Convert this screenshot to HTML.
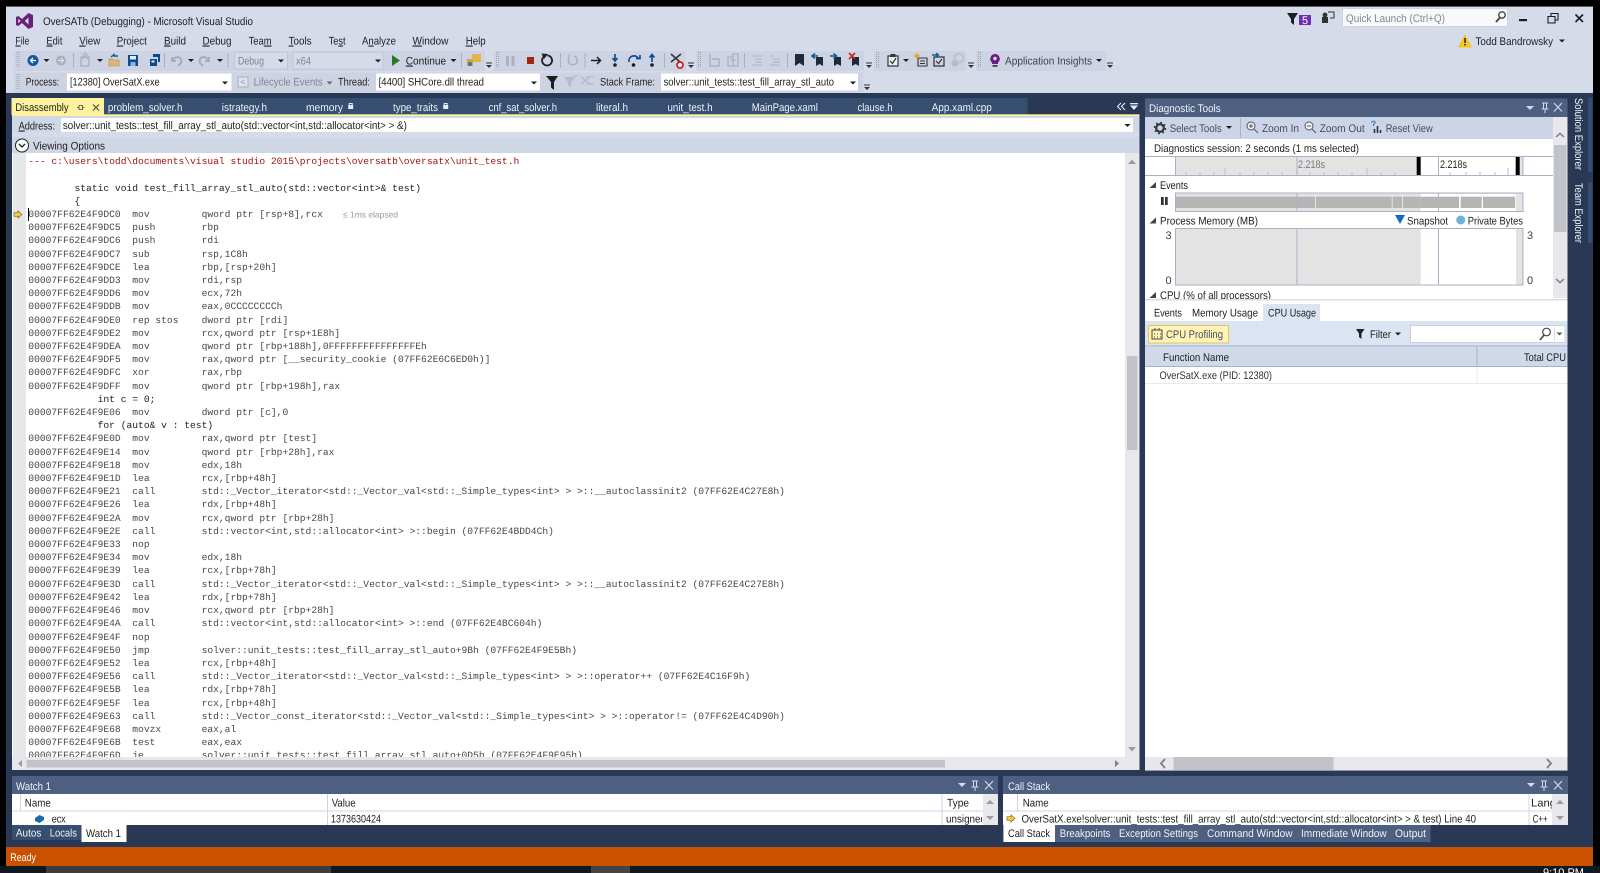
<!DOCTYPE html>
<html><head><meta charset="utf-8"><title>OverSATb (Debugging) - Microsoft Visual Studio</title>
<style>
html,body{margin:0;padding:0;background:#000;width:1600px;height:873px;overflow:hidden}
body>svg{position:absolute;left:0;top:0;text-rendering:geometricPrecision;filter:blur(.3px)}
text{font-family:"Liberation Sans",sans-serif;font-size:11px;fill:#1e1e1e;white-space:pre}
.g{fill:#7f8694}.w{fill:#fff}.l{fill:#f0f3f8}
pre{position:absolute;left:28.3px;top:155.2px;width:1094px;height:601.8px;overflow:hidden;margin:0;font-family:"Liberation Mono",monospace;font-size:9.645px;line-height:13.2px;color:#484848;text-rendering:geometricPrecision;filter:blur(.3px)}
pre b{font-weight:normal;color:#222}pre i{font-style:normal;color:#a31515}
</style></head><body>
<svg width="1600" height="873" viewBox="0 0 1600 873" xmlns="http://www.w3.org/2000/svg">
<defs>
<polygon id="dd" points="-3,-1.5 3,-1.5 0,1.5" fill="#1e1e1e"/>
<g id="ov"><rect x="-3" y="-2.5" width="6" height="1" fill="#333"/><polygon points="-3,0 3,0 0,3" fill="#333"/></g>
<pattern id="dots" width="2" height="2" patternUnits="userSpaceOnUse"><rect width="1" height="1" fill="#9aa3b5"/></pattern>
<g id="grip"><rect x="-2" y="-8" width="4" height="16" fill="url(#dots)"/></g>
<g id="arr"><path d="M-4,-1.8H0V-3.6L4,0L0,3.6V1.8H-4Z" fill="#f5c93b" stroke="#7a6a20" stroke-width=".7"/></g>
<g id="lock"><rect x="-2.5" y="-1" width="5" height="4" fill="#e6eaf2"/><path d="M-1.5,-1V-2.5H1.5V-1" fill="none" stroke="#e6eaf2"/></g>
<g id="tri"><polygon points="-3.5,3 3,3 3,-3" fill="#444"/></g>
</defs>

<!-- frame -->
<rect x="6" y="6" width="1587" height="860" fill="#d6dbe9"/>
<rect x="6" y="6" width="1587" height="1" fill="#5a5f68"/>
<rect x="6" y="93" width="1587" height="754" fill="#293955"/>
<rect x="6" y="847" width="1587" height="19" fill="#ca5100"/>
<rect x="0" y="866" width="1600" height="7" fill="#0e1a22"/>
<rect x="46" y="866" width="285" height="7" fill="#3d3d3d"/>
<rect x="591" y="866" width="39" height="7" fill="#444"/>
<text x="1543" y="876" class="w" font-size="10">9:10 PM</text>

<!-- title -->
<path fill-rule="evenodd" fill="#68217a" d="M28.5,13L33,15V27L28.5,29L22,23L18.3,26L16,25V17L18.3,16L22,19ZM28.5,17.5L24.8,21L28.5,24.5ZM18.3,18.7V23.3L20.6,21Z"/>
<text x="43" y="25" textLength="210" lengthAdjust="spacingAndGlyphs">OverSATb (Debugging) - Microsoft Visual Studio</text>
<path d="M1287,13H1298L1294,19V25L1291,22.5V19Z" fill="#1e1e1e"/>
<rect x="1299" y="15" width="12" height="10" fill="#6c2fb4"/><text x="1302" y="24" class="w" font-size="10">5</text>
<rect x="1322" y="17" width="6" height="6" fill="#333"/><circle cx="1325" cy="15" r="2.4" fill="#333"/><path d="M1328,12H1334V18H1330" fill="none" stroke="#333"/>
<rect x="1342.5" y="8.5" width="165" height="18" fill="#f8f9fb" stroke="#ccd3e2"/>
<text x="1346" y="22" class="g" textLength="99" lengthAdjust="spacingAndGlyphs">Quick Launch (Ctrl+Q)</text>
<circle cx="1502" cy="15" r="3.2" fill="none" stroke="#444" stroke-width="1.4"/><path d="M1500,17.5L1496,22" stroke="#444" stroke-width="1.8"/>
<rect x="1519" y="19" width="8" height="2.2" fill="#1e1e1e"/>
<path d="M1548,16.5H1555V23H1548ZM1548,16.5M1551,16V13.5H1558V20H1555" fill="none" stroke="#1e1e1e" stroke-width="1.1"/>
<path d="M1575.5,14.5L1583,22M1583,14.5L1575.5,22" stroke="#1e1e1e" stroke-width="1.6"/>
<polygon points="1465,35 1471.5,47 1458.5,47" fill="#fccc14" stroke="#e6b800" stroke-width=".5"/><rect x="1464.3" y="38" width="1.5" height="5" fill="#222"/><rect x="1464.3" y="44" width="1.5" height="1.5" fill="#222"/>
<text x="1475.5" y="45" textLength="77.5" lengthAdjust="spacingAndGlyphs">Todd Bandrowsky</text>
<use href="#dd" x="1562" y="41"/>

<!-- menu -->
<g>
<text x="15.4" y="44.5" textLength="14" lengthAdjust="spacingAndGlyphs"><tspan text-decoration="underline">F</tspan>ile</text>
<text x="46.4" y="44.5" textLength="16" lengthAdjust="spacingAndGlyphs"><tspan text-decoration="underline">E</tspan>dit</text>
<text x="79.3" y="44.5" textLength="21" lengthAdjust="spacingAndGlyphs"><tspan text-decoration="underline">V</tspan>iew</text>
<text x="116.8" y="44.5" textLength="30" lengthAdjust="spacingAndGlyphs"><tspan text-decoration="underline">P</tspan>roject</text>
<text x="164" y="44.5" textLength="22" lengthAdjust="spacingAndGlyphs"><tspan text-decoration="underline">B</tspan>uild</text>
<text x="202.5" y="44.5" textLength="29" lengthAdjust="spacingAndGlyphs"><tspan text-decoration="underline">D</tspan>ebug</text>
<text x="248.6" y="44.5" textLength="23" lengthAdjust="spacingAndGlyphs">Tea<tspan text-decoration="underline">m</tspan></text>
<text x="288.6" y="44.5" textLength="23" lengthAdjust="spacingAndGlyphs"><tspan text-decoration="underline">T</tspan>ools</text>
<text x="328.6" y="44.5" textLength="17" lengthAdjust="spacingAndGlyphs">Te<tspan text-decoration="underline">s</tspan>t</text>
<text x="362" y="44.5" textLength="34" lengthAdjust="spacingAndGlyphs">A<tspan text-decoration="underline">n</tspan>alyze</text>
<text x="412.5" y="44.5" textLength="36" lengthAdjust="spacingAndGlyphs"><tspan text-decoration="underline">W</tspan>indow</text>
<text x="465.7" y="44.5" textLength="20" lengthAdjust="spacingAndGlyphs"><tspan text-decoration="underline">H</tspan>elp</text>
</g>

<!-- toolbar row 1 -->
<rect x="14" y="51" width="471" height="20" fill="#cdd3e2"/><rect x="494" y="51" width="192" height="20" fill="#cdd3e2"/><rect x="696" y="51" width="168" height="20" fill="#cdd3e2"/><rect x="874" y="51" width="92" height="20" fill="#cdd3e2"/><rect x="976" y="51" width="130" height="20" fill="#cdd3e2"/>
<use href="#grip" x="18.5" y="60"/><use href="#grip" x="498" y="60"/><use href="#grip" x="700" y="60"/><use href="#grip" x="878" y="60"/><use href="#grip" x="980" y="60"/>
<circle cx="33" cy="60.5" r="5.5" fill="#0e5c9c"/><path d="M36,60.5H31M33,58L30.5,60.5L33,63" stroke="#fff" stroke-width="1.3" fill="none"/>
<use href="#dd" x="46.5" y="60.5"/>
<circle cx="61" cy="60.5" r="5" fill="#a9afbc"/><path d="M58,60.5H63M61,58L63.5,60.5L61,63" stroke="#dde1ea" stroke-width="1.2" fill="none"/>
<rect x="73" y="53" width="1" height="15" fill="#aab1c0"/>
<path d="M81,57H89V66H81ZM85,52V55" fill="none" stroke="#a9afbc" stroke-width="1.3"/><path d="M82,54L88,59M88,54L82,59" stroke="#a9afbc"/><use href="#dd" x="100" y="60.5"/>
<path d="M109,59H112L113,60H119V66H109Z" fill="#dcb67a" stroke="#b58b3a" stroke-width=".6"/><path d="M111,57L114,54.5V56H118" fill="none" stroke="#0e5c9c" stroke-width="1.4"/>
<path d="M128,55H138V66H128Z" fill="#0b4a8f"/><rect x="130" y="56" width="6" height="3.5" fill="#e6eaf2"/><rect x="130.5" y="62" width="5" height="4" fill="#8fb3d9"/>
<path d="M150,59H157V66H150Z" fill="#0b4a8f"/><path d="M153,54H160V62H158V57H153Z" fill="#0b4a8f"/><rect x="151.5" y="60.5" width="3" height="2" fill="#e6eaf2"/>
<rect x="164" y="53" width="1" height="15" fill="#aab1c0"/>
<path d="M172,57V61H176M172,61C175,55 183,56 181,63L178,66" fill="none" stroke="#a3a9b6" stroke-width="1.8"/><use href="#dd" x="191" y="60.5"/>
<path d="M209,57V61H205M209,61C206,55 198,56 200,63L203,66" fill="none" stroke="#a3a9b6" stroke-width="1.8"/><use href="#dd" x="220" y="60.5"/>
<rect x="227.5" y="53" width="1" height="15" fill="#aab1c0"/>
<rect x="234.5" y="52" width="53" height="17" fill="#d6dbe9" stroke="#c0c6d4"/><text x="238" y="64.5" class="g" textLength="26" lengthAdjust="spacingAndGlyphs">Debug</text><use href="#dd" x="281" y="61"/>
<rect x="293" y="52" width="90" height="17" fill="#d6dbe9" stroke="#c0c6d4"/><text x="296" y="64.5" class="g" textLength="15" lengthAdjust="spacingAndGlyphs">x64</text><use href="#dd" x="378" y="61"/>
<polygon points="392,55 400,60.5 392,66" fill="#267a26"/>
<text x="405.7" y="64.5" textLength="40.5" lengthAdjust="spacingAndGlyphs"><tspan text-decoration="underline">C</tspan>ontinue</text><use href="#dd" x="453.5" y="60.5"/>
<rect x="461" y="53" width="1" height="15" fill="#aab1c0"/>
<path d="M472,54H481V62H472Z" fill="#e4b34c"/><path d="M467,59H473V66H467Z" fill="#d9a43c"/><circle cx="470" cy="64" r="2" fill="#2d76b8"/>
<use href="#ov" x="489" y="65"/>
<rect x="506" y="56" width="3" height="10" fill="#aab1c0"/><rect x="511.5" y="56" width="3" height="10" fill="#aab1c0"/>
<rect x="527" y="57" width="7" height="7" fill="#a1260d"/>
<path d="M543.5,57A5,5 0 1 0 547.5,55.5" fill="none" stroke="#1e1e1e" stroke-width="1.8"/><polygon points="541.5,53.5 548,54 544,59" fill="#1e1e1e"/>
<rect x="560" y="53" width="1" height="15" fill="#aab1c0"/>
<path d="M569,58A4.5,4.5 0 1 0 574,56" fill="none" stroke="#a9afbc" stroke-width="1.5"/><path d="M569,54V58" stroke="#a9afbc" stroke-width="1.3"/>
<rect x="584.5" y="53" width="1" height="15" fill="#aab1c0"/>
<path d="M591,60.5H600M597,57L600.5,60.5L597,64" fill="none" stroke="#1e1e1e" stroke-width="1.5"/>
<path d="M615,54V60M612.5,58L615,61L617.5,58" fill="none" stroke="#0e4f96" stroke-width="1.7"/><circle cx="615" cy="65" r="1.8" fill="#1e1e1e"/>
<path d="M629,62C628,55 637,54 638.5,59M636,58.5H640V55" fill="none" stroke="#0e4f96" stroke-width="1.7"/><circle cx="633.5" cy="65" r="1.8" fill="#1e1e1e"/>
<path d="M652,62V55M649.5,57.5L652,54.5L654.5,57.5" fill="none" stroke="#0e4f96" stroke-width="1.7"/><circle cx="652" cy="65" r="1.8" fill="#1e1e1e"/>
<rect x="664" y="53" width="1" height="15" fill="#aab1c0"/>
<path d="M671,54L680,62M681,54L671,62" stroke="#333" stroke-width="1.6"/><circle cx="680" cy="65" r="3" fill="#fff" stroke="#d8141a" stroke-width="1.7"/>
<use href="#ov" x="691" y="65"/>
<path d="M710,54V66H719V59H712" fill="none" stroke="#aab1c0" stroke-width="1.4"/>
<path d="M728,57H733V66H728ZM733,54H738V66H733ZM730,60H736" fill="none" stroke="#aab1c0" stroke-width="1.3"/>
<rect x="744" y="53" width="1" height="15" fill="#aab1c0"/>
<path d="M752,56H762M755,59H762M755,62H762M752,65H762" stroke="#b5bbc8" stroke-width="1.2"/>
<path d="M770,56H774M773,59H780M773,62H780M770,65H780" stroke="#b5bbc8" stroke-width="1.2"/>
<rect x="787" y="53" width="1" height="15" fill="#aab1c0"/>
<path d="M795,54H804V66L799.5,63L795,66Z" fill="#1e2a3a"/>
<path d="M816,57H823V66L819.5,64L816,66Z" fill="#1e2a3a"/><path d="M818,56H812.5M815,53.5L812,56L815,58.5" fill="none" stroke="#0e5c9c" stroke-width="1.6"/>
<path d="M834,57H841V66L837.5,64L834,66Z" fill="#1e2a3a"/><path d="M830,56H836M833.5,53.5L836.5,56L833.5,58.5" fill="none" stroke="#0e5c9c" stroke-width="1.6"/>
<path d="M852,57H859V66L855.5,64L852,66Z" fill="#1e2a3a"/><path d="M849,53L855,59M855,53L849,59" stroke="#c8261a" stroke-width="1.6"/>
<use href="#ov" x="869" y="65"/>
<path d="M888,56H898V66H888Z" fill="#eef0f5" stroke="#333" stroke-width="1.2"/><rect x="890.5" y="54" width="5" height="3" fill="#333"/><path d="M890,61L892.5,63.5L896,58" fill="none" stroke="#333" stroke-width="1.2"/>
<use href="#dd" x="906" y="60.5"/>
<path d="M918,58H927V66H918ZM920,61H925M920,63.5H925" fill="none" stroke="#333" stroke-width="1.1"/><circle cx="917" cy="56" r="2.4" fill="#e2a63a"/>
<path d="M934,57H944V66H934Z" fill="none" stroke="#333" stroke-width="1.2"/><path d="M936,61L938.5,63.5L942,59" fill="none" stroke="#333" stroke-width="1.2"/><path d="M932,55H938M936,53L938.5,55L936,57" fill="none" stroke="#0e5c9c" stroke-width="1.4"/>
<circle cx="959" cy="58" r="4.5" fill="none" stroke="#b5bbc8" stroke-width="1.4"/><circle cx="955" cy="63" r="3.5" fill="#b5bbc8"/>
<use href="#ov" x="971" y="65"/>
<path d="M995,54A4.8,4.8 0 0 1 998,62.5V64H992V62.5A4.8,4.8 0 0 1 995,54Z" fill="#68217a"/><circle cx="995" cy="58.5" r="1.7" fill="#e6d7ee"/><rect x="992.5" y="65" width="5" height="1.8" fill="#444"/>
<text x="1005" y="64.5" style="fill:#3b4252" textLength="87" lengthAdjust="spacingAndGlyphs">Application Insights</text><use href="#dd" x="1099" y="60.5"/>
<use href="#ov" x="1110" y="65"/>

<!-- toolbar row 2 -->
<rect x="14" y="72.5" width="849" height="20" fill="#cdd3e2"/>
<use href="#grip" x="18.5" y="82"/>
<text x="25.7" y="85.5" textLength="33.5" lengthAdjust="spacingAndGlyphs">Process:</text>
<rect x="67" y="73.5" width="164.5" height="17" fill="#fff"/>
<text x="70" y="85.5" textLength="89.6" lengthAdjust="spacingAndGlyphs">[12380] OverSatX.exe</text><use href="#dd" x="225" y="83"/>
<rect x="238" y="77" width="10" height="10" fill="#dfe3ec" stroke="#a9afbc"/><path d="M245,80L241,82L245,84" fill="none" stroke="#a9afbc"/>
<text x="253.6" y="85.5" class="g" textLength="69" lengthAdjust="spacingAndGlyphs">Lifecycle Events</text><use href="#dd" x="329.6" y="83" opacity=".6"/>
<text x="338" y="85.5" textLength="32" lengthAdjust="spacingAndGlyphs">Thread:</text>
<rect x="376" y="73.5" width="164" height="17" fill="#fff"/>
<text x="378.6" y="85.5" textLength="105.4" lengthAdjust="spacingAndGlyphs">[4400] SHCore.dll thread</text><use href="#dd" x="534" y="83"/>
<path d="M546,76H558L554,82V90L551,87.5V82Z" fill="#1e1e1e"/>
<path d="M564,77H575L571,82V87L568,85V82Z" fill="#b5bbc8"/><path d="M570,78L578,75" stroke="#b5bbc8"/>
<path d="M581,77L590,84M581,84L590,77M586,77H594M586,84H594" stroke="#b5bbc8" stroke-width="1.2"/>
<text x="600" y="85.5" textLength="55" lengthAdjust="spacingAndGlyphs">Stack Frame:</text>
<rect x="661" y="73.5" width="197" height="17" fill="#fff"/>
<text x="663.6" y="85.5" textLength="170.4" lengthAdjust="spacingAndGlyphs">solver::unit_tests::test_fill_array_stl_auto</text><use href="#dd" x="853" y="83"/>
<use href="#ov" x="867" y="87"/>

<!-- document tabs -->
<rect x="104" y="98" width="923.5" height="17" fill="#364e6f"/>
<rect x="11.5" y="98" width="92.5" height="17" fill="#fff29d"/>
<text x="15.4" y="111" textLength="53.2" lengthAdjust="spacingAndGlyphs">Disassembly</text>
<path d="M79,105.5H82.5V109.5H79ZM82.5,107.5H84.5M77,107.5H79" fill="none" stroke="#444" stroke-width=".8"/>
<path d="M93,104.5L99,110.5M99,104.5L93,110.5" stroke="#444" stroke-width="1"/>
<g class="tabs">
<text class="l" x="107.9" y="111" textLength="74.6" lengthAdjust="spacingAndGlyphs">problem_solver.h</text>
<text class="l" x="221.8" y="111" textLength="45.2" lengthAdjust="spacingAndGlyphs">istrategy.h</text>
<text class="l" x="306" y="111" textLength="37" lengthAdjust="spacingAndGlyphs">memory</text><use href="#lock" x="350.7" y="106"/>
<text class="l" x="393" y="111" textLength="45" lengthAdjust="spacingAndGlyphs">type_traits</text><use href="#lock" x="445.7" y="106"/>
<text class="l" x="488.6" y="111" textLength="68.4" lengthAdjust="spacingAndGlyphs">cnf_sat_solver.h</text>
<text class="l" x="596" y="111" textLength="32" lengthAdjust="spacingAndGlyphs">literal.h</text>
<text class="l" x="667.5" y="111" textLength="45" lengthAdjust="spacingAndGlyphs">unit_test.h</text>
<text class="l" x="751.8" y="111" textLength="66.1" lengthAdjust="spacingAndGlyphs">MainPage.xaml</text>
<text class="l" x="857.5" y="111" textLength="35" lengthAdjust="spacingAndGlyphs">clause.h</text>
<text class="l" x="931.8" y="111" textLength="60" lengthAdjust="spacingAndGlyphs">App.xaml.cpp</text>
</g>
<path d="M1121,103L1117.5,106.5L1121,110M1125,103L1121.5,106.5L1125,110" fill="none" stroke="#e6eaf2" stroke-width="1.1"/>
<rect x="1130" y="103" width="8" height="1.3" fill="#e6eaf2"/><polygon points="1130,105.5 1138,105.5 1134,110" fill="#e6eaf2"/>

<!-- address + doc -->
<rect x="12" y="114.3" width="1127.5" height="2" fill="#fff29d"/>
<rect x="12" y="116" width="1127.5" height="21" fill="#d0d7e6"/>
<text x="18.6" y="129.5" textLength="36.5" lengthAdjust="spacingAndGlyphs"><tspan text-decoration="underline">A</tspan>ddress:</text>
<rect x="61" y="118" width="1072" height="14" fill="#fdfdfd"/>
<text x="62.9" y="129" textLength="344" lengthAdjust="spacingAndGlyphs">solver::unit_tests::test_fill_array_stl_auto(std::vector&lt;int,std::allocator&lt;int&gt; &gt; &amp;)</text>
<use href="#dd" x="1127.5" y="125.5"/>
<rect x="12" y="132" width="1127.5" height="5" fill="#d6dbe9"/>
<rect x="12" y="137" width="1127.5" height="16" fill="#cfd6e6"/>
<circle cx="22" cy="145.5" r="6.5" fill="#fff" stroke="#1e1e1e" stroke-width="1"/><path d="M19,144L22,147L25,144" fill="none" stroke="#1e1e1e" stroke-width="1.3"/>
<text x="33" y="149.5" textLength="72" lengthAdjust="spacingAndGlyphs">Viewing Options</text>
<rect x="12" y="153" width="1127.5" height="604" fill="#fff"/>
<rect x="13" y="153" width="13" height="604" fill="#e6e7e8"/>
<rect x="1125" y="153" width="14.5" height="604" fill="#e8e8ec"/>
<rect x="1127" y="356" width="10.5" height="94" fill="#c2c3c9"/>
<polygon points="1128,164 1136,164 1132,159.5" fill="#9a9ca3"/>
<polygon points="1128,747 1136,747 1132,751.5" fill="#9a9ca3"/>
<rect x="12" y="757" width="1127.5" height="13" fill="#e8e8ec"/>
<rect x="26.5" y="760" width="918.5" height="7.5" fill="#c2c3c9"/>
<polygon points="22,760 22,767 18,763.5" fill="#9a9ca3"/>
<polygon points="1115,760 1115,767 1119,763.5" fill="#7d7f86"/>
<use href="#arr" x="18" y="214.5"/>
<rect x="28" y="208" width="1" height="13" fill="#000"/>
<text x="343" y="217.5" style="fill:#9a9a9a;font-size:8.5px" textLength="55" lengthAdjust="spacingAndGlyphs">≤ 1ms elapsed</text>

<!-- Diagnostic panel -->
<rect x="1145" y="98.5" width="422.5" height="672" fill="#fff"/>
<rect x="1145" y="98.5" width="422.5" height="18.5" fill="#4d6082"/>
<text class="l" x="1149" y="112" textLength="71.7" lengthAdjust="spacingAndGlyphs">Diagnostic Tools</text>
<polygon points="1526,106 1534,106 1530,110" fill="#d6dbe9"/>
<path d="M1542,103H1548M1543.5,103V109H1546.5V103M1541.5,109H1548.5M1545,109V113" fill="none" stroke="#d6dbe9"/>
<path d="M1554,103L1562,111.5M1562,103L1554,111.5" stroke="#d6dbe9" stroke-width="1.1"/>
<rect x="1145" y="117" width="408" height="22" fill="#ccd5e8"/>
<circle cx="1160" cy="128" r="3.8" fill="none" stroke="#333" stroke-width="2.2"/><circle cx="1160" cy="128" r="5.6" fill="none" stroke="#333" stroke-width="1.4" stroke-dasharray="1.8 2.6"/>
<text x="1169.7" y="132" style="fill:#444c5c" textLength="52" lengthAdjust="spacingAndGlyphs">Select Tools</text>
<use href="#dd" x="1229" y="127.5"/>
<rect x="1240" y="118" width="1" height="20" fill="#a9b2c4"/>
<circle cx="1251" cy="126" r="4" fill="#eef1f7" stroke="#555" stroke-width="1"/><path d="M1254,129L1258,133M1249,126H1253M1251,124V128" stroke="#555"/>
<text x="1262" y="132" style="fill:#444c5c" textLength="37" lengthAdjust="spacingAndGlyphs">Zoom In</text>
<circle cx="1309" cy="126" r="4" fill="#eef1f7" stroke="#555" stroke-width="1"/><path d="M1312,129L1316,133M1307,126H1311" stroke="#555"/>
<text x="1319.7" y="132" style="fill:#444c5c" textLength="45" lengthAdjust="spacingAndGlyphs">Zoom Out</text>
<path d="M1374.5,133V129M1377.5,133V126M1380.5,133V130" stroke="#333" stroke-width="1.6" fill="none"/><path d="M1371.5,123C1371.5,120.5 1376,120.5 1375,123L1373.5,124.5V126" stroke="#2d76b8" fill="none"/>
<text x="1385.7" y="132" style="fill:#444c5c" textLength="47" lengthAdjust="spacingAndGlyphs">Reset View</text>
<rect x="1553" y="117" width="14.5" height="181" fill="#e8e8ec"/>
<rect x="1554" y="145" width="12.5" height="87" fill="#c2c3c9"/>
<path d="M1556,137L1560,133.5L1564,137" fill="none" stroke="#8b8d94" stroke-width="1.8"/>
<path d="M1556,279L1560,282.5L1564,279" fill="none" stroke="#8b8d94" stroke-width="1.8"/>
<text x="1154" y="152" textLength="205" lengthAdjust="spacingAndGlyphs">Diagnostics session: 2 seconds (1 ms selected)</text>
<rect x="1145" y="156" width="408" height="1" fill="#a7b2c4"/>
<rect x="1145" y="175" width="408" height="1" fill="#a7b2c4"/>
<rect x="1176" y="157" width="241" height="18" fill="#e3e3e3"/><rect x="1515.7" y="157" width="7" height="18" fill="#e3e3e3"/>
<rect x="1175" y="157" width="1" height="18" fill="#a7b2c4"/>
<rect x="1296.5" y="157" width="1" height="18" fill="#a7b2c4"/><rect x="1438" y="157" width="1" height="18" fill="#a7b2c4"/><rect x="1522.5" y="157" width="1" height="18" fill="#a7b2c4"/>
<rect x="1416.7" y="157" width="4" height="18" fill="#000"/><rect x="1515.7" y="157" width="4" height="18" fill="#000"/>
<path d="M1186,175v-3M1200,175v-3M1214,175v-3M1225,175v-7M1240,175v-3M1254,175v-3M1268,175v-3M1282,175v-3M1310,175v-3M1324,175v-3M1338,175v-3M1352,175v-3M1367,175v-7M1381,175v-3M1395,175v-3M1450,175v-3M1466,175v-3M1480,175v-3M1495,175v-3M1508,175v-7" stroke="#b8bcc6"/>
<text x="1298" y="168" style="fill:#7a7a7a" textLength="27" lengthAdjust="spacingAndGlyphs">2.218s</text>
<text x="1440" y="168" textLength="27" lengthAdjust="spacingAndGlyphs">2.218s</text>
<use href="#tri" x="1153" y="185"/>
<text x="1160" y="189" textLength="28" lengthAdjust="spacingAndGlyphs">Events</text>
<rect x="1175.5" y="193" width="347.5" height="18.5" fill="#e3e3e3" stroke="#a7b2c4"/>
<rect x="1420.7" y="194" width="95" height="17" fill="#fff"/>
<g fill="#b5b5b5"><rect x="1176" y="196.7" width="139" height="11.3"/><rect x="1316" y="196.7" width="75.7" height="11.3"/><rect x="1392.7" y="196.7" width="9.3" height="11.3"/><rect x="1403" y="196.7" width="17.7" height="11.3"/><rect x="1420.7" y="196.7" width="38.3" height="11.3"/><rect x="1460.7" y="196.7" width="21" height="11.3"/><rect x="1483" y="196.7" width="32" height="11.3"/></g>
<rect x="1296.5" y="193" width="1" height="18.5" fill="#a7b2c4"/><rect x="1438" y="193" width="1" height="3.7" fill="#a7b2c4"/><rect x="1438" y="208" width="1" height="3.5" fill="#a7b2c4"/>
<rect x="1161" y="197" width="2.7" height="8" fill="#333"/><rect x="1165" y="197" width="2.7" height="8" fill="#333"/>
<use href="#tri" x="1153" y="220.5"/>
<text x="1160" y="224.5" textLength="98" lengthAdjust="spacingAndGlyphs">Process Memory (MB)</text>
<polygon points="1395,215 1405,215 1400,224" fill="#0e6fc2"/>
<text x="1407" y="224.5" textLength="41" lengthAdjust="spacingAndGlyphs">Snapshot</text>
<circle cx="1460.7" cy="220" r="4.5" fill="#6fb0d5"/>
<text x="1467.7" y="224.5" textLength="55.3" lengthAdjust="spacingAndGlyphs">Private Bytes</text>
<rect x="1175.5" y="228.5" width="347.5" height="56.5" fill="#fff" stroke="#a7b2c4"/>
<rect x="1176" y="229" width="244.7" height="55.5" fill="#e3e3e3"/><rect x="1516" y="229" width="6.5" height="55.5" fill="#e3e3e3"/>
<rect x="1296.5" y="229" width="1" height="56" fill="#a7b2c4"/><rect x="1438" y="229" width="1" height="56" fill="#a7b2c4"/>
<text x="1165.5" y="239" style="fill:#444">3</text><text x="1165.5" y="284" style="fill:#444">0</text>
<text x="1527" y="239" style="fill:#444">3</text><text x="1527" y="284" style="fill:#444">0</text>
<svg x="1145" y="286" width="408" height="13"><use href="#tri" x="8" y="9"/><text x="15" y="13" textLength="111" lengthAdjust="spacingAndGlyphs">CPU (% of all processors)</text></svg>
<rect x="1145" y="299" width="422.5" height="1.5" fill="#d6dbe9"/>
<text x="1154" y="316.5" textLength="28" lengthAdjust="spacingAndGlyphs">Events</text>
<text x="1192" y="316.5" textLength="66" lengthAdjust="spacingAndGlyphs">Memory Usage</text>
<rect x="1263" y="304" width="57" height="17" fill="#dbe4f3"/>
<text x="1268" y="316.5" textLength="48" lengthAdjust="spacingAndGlyphs">CPU Usage</text>
<rect x="1145" y="321" width="422.5" height="25" fill="#dbe4f3"/>
<rect x="1148.5" y="325.5" width="80" height="17.5" fill="#fff3b5" stroke="#e5c365"/>
<path d="M1152,330H1162V339H1152ZM1154,334h1M1157,334h1M1160,334h1M1154,337h1M1157,337h1M1160,337h1M1155,328v2M1159,328v2" fill="none" stroke="#444"/>
<text x="1166" y="338" style="fill:#444c5c" textLength="57" lengthAdjust="spacingAndGlyphs">CPU Profiling</text>
<path d="M1356,329H1364.5L1361.5,333.5V339L1359,337V333.5Z" fill="#222"/>
<text x="1370" y="338" textLength="21" lengthAdjust="spacingAndGlyphs">Filter</text><use href="#dd" x="1398" y="334"/>
<rect x="1410.5" y="325.5" width="154.5" height="17" fill="#fff" stroke="#c8d1e2"/>
<circle cx="1546.5" cy="332" r="3.8" fill="none" stroke="#444" stroke-width="1.2"/><path d="M1544,335L1540,340" stroke="#444" stroke-width="1.6"/>
<rect x="1554" y="327" width="1" height="14" fill="#d6dbe9"/><polygon points="1556.5,332.5 1562.5,332.5 1559.5,335.5" fill="#555"/>
<rect x="1145" y="346" width="422.5" height="20" fill="#cfd9ea"/>
<rect x="1145" y="345" width="422.5" height="1.5" fill="#b9c4d8"/>
<rect x="1145" y="366" width="422.5" height="1" fill="#a7b2c4"/>
<rect x="1476.5" y="346" width="1" height="20" fill="#a7b2c4"/><rect x="1476.5" y="367" width="1" height="16" fill="#e6e9f0"/>
<text x="1163" y="361" textLength="66" lengthAdjust="spacingAndGlyphs">Function Name</text>
<text x="1524" y="361" textLength="42" lengthAdjust="spacingAndGlyphs">Total CPU</text>
<text x="1159.5" y="379" style="fill:#333" textLength="112.5" lengthAdjust="spacingAndGlyphs">OverSatX.exe (PID: 12380)</text>
<rect x="1145" y="383" width="422.5" height="1" fill="#e6e9f0"/>
<rect x="1145" y="757" width="422.5" height="13" fill="#e8e8ec"/>
<rect x="1173.5" y="757" width="160" height="13" fill="#c2c3c9"/>
<path d="M1165,759L1161,763.5L1165,768" fill="none" stroke="#7d7f86" stroke-width="1.8"/>
<path d="M1547,759L1551,763.5L1547,768" fill="none" stroke="#7d7f86" stroke-width="1.8"/>

<!-- side tabs -->
<rect x="1588" y="98" width="4.5" height="74" fill="#364e6f"/>
<rect x="1588" y="182" width="4.5" height="61" fill="#364e6f"/>
<text class="l" transform="translate(1575,98) rotate(90)" textLength="72" lengthAdjust="spacingAndGlyphs">Solution Explorer</text>
<text class="l" transform="translate(1575,183) rotate(90)" textLength="60" lengthAdjust="spacingAndGlyphs">Team Explorer</text>

<!-- Watch panel -->
<rect x="12" y="776" width="986" height="18" fill="#4d6082"/>
<text class="l" x="16" y="790" textLength="35" lengthAdjust="spacingAndGlyphs">Watch 1</text>
<polygon points="958,783 966,783 962,787" fill="#d6dbe9"/>
<path d="M972,781H978M973.5,781V787H976.5V781M971.5,787H978.5M975,787V791" fill="none" stroke="#d6dbe9"/>
<path d="M985,781L993,789.5M993,781L985,789.5" stroke="#d6dbe9" stroke-width="1.1"/>
<rect x="12" y="794" width="986" height="31" fill="#fff"/>
<rect x="983" y="794" width="15" height="31" fill="#e8e8ec"/>
<rect x="12" y="810.5" width="971" height="1" fill="#ccd5e3"/>
<rect x="20" y="794" width="1" height="17" fill="#ccd5e3"/><rect x="327" y="794" width="1" height="31" fill="#ccd5e3"/><rect x="941.5" y="794" width="1" height="31" fill="#ccd5e3"/>
<text x="24.8" y="806.5" textLength="26" lengthAdjust="spacingAndGlyphs">Name</text>
<text x="331.7" y="806.5" textLength="24" lengthAdjust="spacingAndGlyphs">Value</text>
<text x="947" y="806.5" textLength="22" lengthAdjust="spacingAndGlyphs">Type</text>
<path d="M35,818L39.5,815L44,817V820L39.5,823L35,821Z" fill="#1c6aa8"/>
<text x="51.7" y="822.5" textLength="14" lengthAdjust="spacingAndGlyphs">ecx</text>
<text x="331" y="822.5" textLength="50" lengthAdjust="spacingAndGlyphs">1373630424</text>
<svg x="900" y="810" width="82" height="16"><text x="46" y="12.5" textLength="40" lengthAdjust="spacingAndGlyphs">unsigned</text></svg>
<polygon points="986,804 994,804 990,800" fill="#9a9ca3"/><polygon points="986,816 994,816 990,820" fill="#9a9ca3"/>
<rect x="12" y="825" width="69.5" height="15" fill="#364e6f"/>
<text class="l" x="15.9" y="836.5" textLength="25.5" lengthAdjust="spacingAndGlyphs">Autos</text>
<text class="l" x="49.7" y="836.5" textLength="27.3" lengthAdjust="spacingAndGlyphs">Locals</text>
<rect x="81.5" y="825" width="45" height="17" fill="#fff"/>
<text x="86" y="837" textLength="35" lengthAdjust="spacingAndGlyphs">Watch 1</text>

<!-- Call stack panel -->
<rect x="1003" y="776" width="565" height="18" fill="#4d6082"/>
<text class="l" x="1008" y="790" textLength="42" lengthAdjust="spacingAndGlyphs">Call Stack</text>
<polygon points="1527,783 1535,783 1531,787" fill="#d6dbe9"/>
<path d="M1541,781H1547M1542.5,781V787H1545.5V781M1540.5,787H1547.5M1544,787V791" fill="none" stroke="#d6dbe9"/>
<path d="M1554,781L1562,789.5M1562,781L1554,789.5" stroke="#d6dbe9" stroke-width="1.1"/>
<rect x="1003" y="794" width="565" height="31" fill="#fff"/>
<rect x="1552" y="794" width="16" height="31" fill="#e8e8ec"/>
<rect x="1003" y="810.5" width="549" height="1" fill="#ccd5e3"/>
<rect x="1017" y="794" width="1" height="17" fill="#ccd5e3"/><rect x="1528.5" y="794" width="1" height="31" fill="#ccd5e3"/>
<text x="1022.7" y="806.5" textLength="26" lengthAdjust="spacingAndGlyphs">Name</text>
<svg x="1529" y="796" width="23" height="15"><text x="2" y="10.5" textLength="25" lengthAdjust="spacingAndGlyphs">Lang</text></svg>
<use href="#arr" x="1011" y="818.5"/>
<text x="1021.5" y="822.5" textLength="454.5" lengthAdjust="spacingAndGlyphs">OverSatX.exe!solver::unit_tests::test_fill_array_stl_auto(std::vector&lt;int,std::allocator&lt;int&gt; &gt; &amp; test) Line 40</text>
<text x="1532.6" y="822.5" textLength="15" lengthAdjust="spacingAndGlyphs">C++</text>
<polygon points="1556,804 1564,804 1560,800" fill="#9a9ca3"/><polygon points="1556,816 1564,816 1560,820" fill="#9a9ca3"/>
<rect x="1003" y="825" width="427.5" height="17" fill="#4d6082"/>
<rect x="1003.5" y="825" width="51.5" height="17" fill="#fff"/>
<text x="1008" y="837" textLength="42" lengthAdjust="spacingAndGlyphs">Call Stack</text>
<text class="l" x="1059.8" y="837" textLength="50.6" lengthAdjust="spacingAndGlyphs">Breakpoints</text>
<text class="l" x="1119" y="837" textLength="79" lengthAdjust="spacingAndGlyphs">Exception Settings</text>
<text class="l" x="1207" y="837" textLength="85.6" lengthAdjust="spacingAndGlyphs">Command Window</text>
<text class="l" x="1301" y="837" textLength="85.7" lengthAdjust="spacingAndGlyphs">Immediate Window</text>
<text class="l" x="1395" y="837" textLength="31" lengthAdjust="spacingAndGlyphs">Output</text>

<!-- status -->
<text class="w" x="10.3" y="861" textLength="25.7" lengthAdjust="spacingAndGlyphs">Ready</text>
</svg>
<pre><i>--- c:\users\todd\documents\visual studio 2015\projects\oversatb\oversatx\unit_test.h</i>

<b>        static void test_fill_array_stl_auto(std::vector&lt;int&gt;&amp; test)
        {</b>
00007FF62E4F9DC0  mov         qword ptr [rsp+8],rcx
00007FF62E4F9DC5  push        rbp
00007FF62E4F9DC6  push        rdi
00007FF62E4F9DC7  sub         rsp,1C8h
00007FF62E4F9DCE  lea         rbp,[rsp+20h]
00007FF62E4F9DD3  mov         rdi,rsp
00007FF62E4F9DD6  mov         ecx,72h
00007FF62E4F9DDB  mov         eax,0CCCCCCCCh
00007FF62E4F9DE0  rep stos    dword ptr [rdi]
00007FF62E4F9DE2  mov         rcx,qword ptr [rsp+1E8h]
00007FF62E4F9DEA  mov         qword ptr [rbp+188h],0FFFFFFFFFFFFFFFEh
00007FF62E4F9DF5  mov         rax,qword ptr [__security_cookie (07FF62E6C6ED0h)]
00007FF62E4F9DFC  xor         rax,rbp
00007FF62E4F9DFF  mov         qword ptr [rbp+198h],rax
<b>            int c = 0;</b>
00007FF62E4F9E06  mov         dword ptr [c],0
<b>            for (auto&amp; v : test)</b>
00007FF62E4F9E0D  mov         rax,qword ptr [test]
00007FF62E4F9E14  mov         qword ptr [rbp+28h],rax
00007FF62E4F9E18  mov         edx,18h
00007FF62E4F9E1D  lea         rcx,[rbp+48h]
00007FF62E4F9E21  call        std::_Vector_iterator&lt;std::_Vector_val&lt;std::_Simple_types&lt;int&gt; &gt; &gt;::__autoclassinit2 (07FF62E4C27E8h)
00007FF62E4F9E26  lea         rdx,[rbp+48h]
00007FF62E4F9E2A  mov         rcx,qword ptr [rbp+28h]
00007FF62E4F9E2E  call        std::vector&lt;int,std::allocator&lt;int&gt; &gt;::begin (07FF62E4BDD4Ch)
00007FF62E4F9E33  nop
00007FF62E4F9E34  mov         edx,18h
00007FF62E4F9E39  lea         rcx,[rbp+78h]
00007FF62E4F9E3D  call        std::_Vector_iterator&lt;std::_Vector_val&lt;std::_Simple_types&lt;int&gt; &gt; &gt;::__autoclassinit2 (07FF62E4C27E8h)
00007FF62E4F9E42  lea         rdx,[rbp+78h]
00007FF62E4F9E46  mov         rcx,qword ptr [rbp+28h]
00007FF62E4F9E4A  call        std::vector&lt;int,std::allocator&lt;int&gt; &gt;::end (07FF62E4BC604h)
00007FF62E4F9E4F  nop
00007FF62E4F9E50  jmp         solver::unit_tests::test_fill_array_stl_auto+9Bh (07FF62E4F9E5Bh)
00007FF62E4F9E52  lea         rcx,[rbp+48h]
00007FF62E4F9E56  call        std::_Vector_iterator&lt;std::_Vector_val&lt;std::_Simple_types&lt;int&gt; &gt; &gt;::operator++ (07FF62E4C16F9h)
00007FF62E4F9E5B  lea         rdx,[rbp+78h]
00007FF62E4F9E5F  lea         rcx,[rbp+48h]
00007FF62E4F9E63  call        std::_Vector_const_iterator&lt;std::_Vector_val&lt;std::_Simple_types&lt;int&gt; &gt; &gt;::operator!= (07FF62E4C4D90h)
00007FF62E4F9E68  movzx       eax,al
00007FF62E4F9E6B  test        eax,eax
00007FF62E4F9E6D  je          solver::unit_tests::test_fill_array_stl_auto+0D5h (07FF62E4F9E95h)</pre>
</body></html>
